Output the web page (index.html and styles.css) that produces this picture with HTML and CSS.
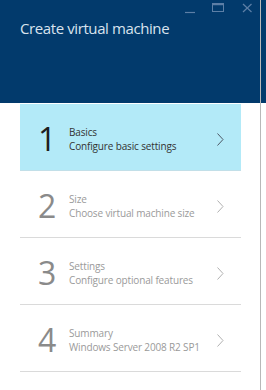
FILE: index.html
```html
<!DOCTYPE html>
<html lang="en">
<head>
    <meta charset="UTF-8">
    <title>Create virtual machine</title>
    <link rel="stylesheet" href="styles.css">
</head>
<body>
    <div class="window">
        <div class="blade">
            <div class="header">
                <div class="controls">
                    <svg width="80" height="16" viewBox="0 0 80 16">
                        <line x1="5" y1="12.5" x2="15" y2="12.5" stroke="#5d7fa6" stroke-width="1.2"/>
                        <rect x="32.5" y="3.5" width="11" height="8" fill="none" stroke="#5d7fa6" stroke-width="1"/>
                        <line x1="32.5" y1="4.5" x2="43.5" y2="4.5" stroke="#5d7fa6" stroke-width="1.5"/>
                        <line x1="63" y1="4" x2="71.5" y2="12" stroke="#5d7fa6" stroke-width="1.2"/>
                        <line x1="71.5" y1="4" x2="63" y2="12" stroke="#5d7fa6" stroke-width="1.2"/>
                    </svg>
                </div>
                <h1>Create virtual machine</h1>
            </div>

            <ul class="steps">
                <li class="step active">
                    <span class="num">1</span>
                    <div class="info">
                        <div class="name">Basics</div>
                        <div class="desc">Configure basic settings</div>
                    </div>
                    <svg class="chevron" width="7" height="13" viewBox="0 0 7 13"><polyline points="0.5,0.5 6,6.5 0.5,12.5" fill="none" stroke="currentColor" stroke-width="1"/></svg>
                </li>
                <li class="step">
                    <span class="num">2</span>
                    <div class="info">
                        <div class="name">Size</div>
                        <div class="desc">Choose virtual machine size</div>
                    </div>
                    <svg class="chevron" width="7" height="13" viewBox="0 0 7 13"><polyline points="0.5,0.5 6,6.5 0.5,12.5" fill="none" stroke="currentColor" stroke-width="1"/></svg>
                </li>
                <li class="step">
                    <span class="num">3</span>
                    <div class="info">
                        <div class="name">Settings</div>
                        <div class="desc">Configure optional features</div>
                    </div>
                    <svg class="chevron" width="7" height="13" viewBox="0 0 7 13"><polyline points="0.5,0.5 6,6.5 0.5,12.5" fill="none" stroke="currentColor" stroke-width="1"/></svg>
                </li>
                <li class="step">
                    <span class="num">4</span>
                    <div class="info">
                        <div class="name">Summary</div>
                        <div class="desc">Windows Server 2008 R2 SP1</div>
                    </div>
                    <svg class="chevron" width="7" height="13" viewBox="0 0 7 13"><polyline points="0.5,0.5 6,6.5 0.5,12.5" fill="none" stroke="currentColor" stroke-width="1"/></svg>
                </li>
            </ul>
        </div>
        <div class="edge"></div>
    </div>
</body>
</html>
```

FILE: styles.css
```css
body {
    margin: 0;
    font-family: "Open Sans", sans-serif;
    background: #ffffff;
}
.window {
    display: flex;
    height: 390px;
}
.blade {
    width: 260px;
}
.edge {
    flex: 1;
    border-left: 1px solid #b8b8b8;
    background: linear-gradient(#023a6c 0, #023a6c 103px, #ffffff 103px);
}
.header {
    height: 103px;
    background: #023a6c;
}
.controls {
    display: flex;
    justify-content: flex-end;
    height: 16px;
}
.controls svg {
    display: block;
}
h1 {
    margin: 2px 0 0 20px;
    font-size: 15px;
    font-weight: 400;
    line-height: 20px;
    letter-spacing: -0.4px;
    color: #d9e3ee;
}
.steps {
    list-style: none;
    margin: 1px 19px 0 20px;
    padding: 0;
}
.step {
    display: flex;
    align-items: center;
    height: 66px;
    border-bottom: 1px solid #dadada;
    color: #9a9a9a;
}
.step.active {
    background: #b3eaf8;
    border-bottom-color: #c2dfe8;
    color: #333333;
}
.num {
    width: 31px;
    margin: 3px 0 0 18px;
    font-size: 32px;
    font-weight: 400;
    line-height: 32px;
    color: #8a8a8a;
}
.step.active .num {
    color: #1e1e1e;
}
.info {
    flex: 1;
    margin-top: 4px;
    font-size: 10px;
    line-height: 14px;
    letter-spacing: -0.15px;
}
.chevron {
    display: block;
    margin: 4px 17px 0 0;
    color: #b0b0b0;
}
.step.active .chevron {
    color: #4d5966;
}
```
